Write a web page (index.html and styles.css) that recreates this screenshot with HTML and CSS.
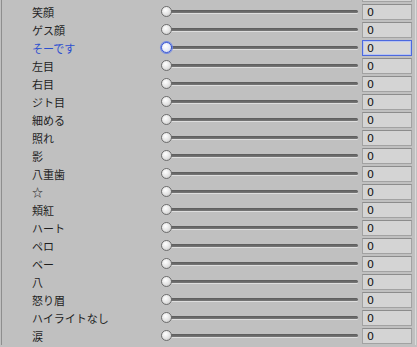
FILE: index.html
```html
<!DOCTYPE html>
<html>
<head>
<meta name="viewport" content="width=device-width, initial-scale=1">
<link rel="stylesheet" href="styles.css">
</head>
<body>

<div id="morphs" class="panel">
    <div class="row"><span class="label"></span><div class="slider"><div class="track"></div><div class="knob"></div></div><input class="num" type="text" value="0"></div>
    <div class="row"><span class="label">笑顔</span><div class="slider"><div class="track"></div><div class="knob"></div></div><input class="num" type="text" value="0"></div>
    <div class="row"><span class="label">ゲス顔</span><div class="slider"><div class="track"></div><div class="knob"></div></div><input class="num" type="text" value="0"></div>
    <div class="row active"><span class="label">そーです</span><div class="slider"><div class="track"></div><div class="knob"></div></div><input class="num" type="text" value="0"></div>
    <div class="row"><span class="label">左目</span><div class="slider"><div class="track"></div><div class="knob"></div></div><input class="num" type="text" value="0"></div>
    <div class="row"><span class="label">右目</span><div class="slider"><div class="track"></div><div class="knob"></div></div><input class="num" type="text" value="0"></div>
    <div class="row"><span class="label">ジト目</span><div class="slider"><div class="track"></div><div class="knob"></div></div><input class="num" type="text" value="0"></div>
    <div class="row"><span class="label">細める</span><div class="slider"><div class="track"></div><div class="knob"></div></div><input class="num" type="text" value="0"></div>
    <div class="row"><span class="label">照れ</span><div class="slider"><div class="track"></div><div class="knob"></div></div><input class="num" type="text" value="0"></div>
    <div class="row"><span class="label">影</span><div class="slider"><div class="track"></div><div class="knob"></div></div><input class="num" type="text" value="0"></div>
    <div class="row"><span class="label">八重歯</span><div class="slider"><div class="track"></div><div class="knob"></div></div><input class="num" type="text" value="0"></div>
    <div class="row"><span class="label">☆</span><div class="slider"><div class="track"></div><div class="knob"></div></div><input class="num" type="text" value="0"></div>
    <div class="row"><span class="label">頬紅</span><div class="slider"><div class="track"></div><div class="knob"></div></div><input class="num" type="text" value="0"></div>
    <div class="row"><span class="label">ハート</span><div class="slider"><div class="track"></div><div class="knob"></div></div><input class="num" type="text" value="0"></div>
    <div class="row"><span class="label">ペロ</span><div class="slider"><div class="track"></div><div class="knob"></div></div><input class="num" type="text" value="0"></div>
    <div class="row"><span class="label">ベー</span><div class="slider"><div class="track"></div><div class="knob"></div></div><input class="num" type="text" value="0"></div>
    <div class="row"><span class="label">八</span><div class="slider"><div class="track"></div><div class="knob"></div></div><input class="num" type="text" value="0"></div>
    <div class="row"><span class="label">怒り眉</span><div class="slider"><div class="track"></div><div class="knob"></div></div><input class="num" type="text" value="0"></div>
    <div class="row"><span class="label">ハイライトなし</span><div class="slider"><div class="track"></div><div class="knob"></div></div><input class="num" type="text" value="0"></div>
    <div class="row"><span class="label">涙</span><div class="slider"><div class="track"></div><div class="knob"></div></div><input class="num" type="text" value="0"></div>
</div>

</body>
</html>
```

FILE: styles.css
```css
html, body {
  margin: 0;
  height: 100%;
  overflow: hidden;
  background: #c0c0c0;
}

/* Morph list panel */
.panel {
  margin-top: -15px;
  margin-left: 1px;
  width: 413px;
  border-left: 1px solid #8e8e8e;
  border-right: 1px solid #dadada;
  font-family: "Noto Sans CJK JP", "DejaVu Sans", sans-serif;
  font-size: 11px;
  color: #1e1e1e;
}

.row {
  display: flex;
  align-items: center;
  height: 18px;
}

.label {
  width: 128px;
  padding-left: 30px;
  white-space: nowrap;
  line-height: 18px;
}

.row.active .label {
  color: #2c4fd0;
}

/* Slider */
.slider {
  position: relative;
  width: 198px;
  height: 12px;
  margin-right: 4px;
}

.track {
  margin-left: 6px;
  margin-top: 4px;
  width: 192px;
  height: 3px;
  border-radius: 2px;
  background: linear-gradient(#5a5a5a, #787878);
  box-shadow: 0 1px 0 #dedede;
}

.knob {
  position: absolute;
  left: 1px;
  top: 0;
  width: 9px;
  height: 9px;
  border-radius: 50%;
  border: 1px solid #6e6e6e;
  background: radial-gradient(circle at 40% 35%, #ffffff, #e2e2e2 55%, #b8b8b8);
}

.row.active .knob {
  border: 1px solid #3a58d8;
  box-shadow: 0 0 0 1px #6d86e6;
  background: radial-gradient(circle at 40% 35%, #ffffff, #e4e8f6 60%, #c4cbe6);
}

/* Number field */
.num {
  box-sizing: border-box;
  width: 50px;
  height: 16px;
  margin: 0;
  padding: 0 4px;
  border: 1px solid #a2a2a2;
  border-top-color: #8c8c8c;
  background: #d4d4d4;
  font-family: "DejaVu Sans", sans-serif;
  font-size: 11px;
  color: #111;
  outline: none;
}

.row.active .num {
  border: 1px solid #4d69de;
  box-shadow: inset 0 0 0 1px #b8c4f0;
  background: #d8d8d8;
}
```
